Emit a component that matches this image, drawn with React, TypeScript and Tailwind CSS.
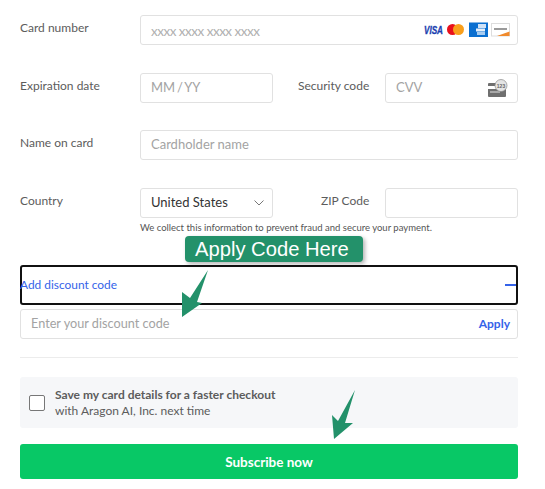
import React from 'react'

const inputBox = 'h-[30px] flex items-center rounded-[3px] border border-[#e1e1e1] bg-white pl-[10px] text-[13px] text-[#a3a3a3]'
const label = 'text-[12px] text-[#5c5c5c]'

const CardLogos = () => (
  <div className="flex items-center mr-[7px]">
    <svg width="86" height="16" viewBox="0 0 86 16">
      <text x="0" y="11.5" fontFamily="Liberation Sans" fontStyle="italic" fontWeight="700" fontSize="10" textLength="19" lengthAdjust="spacingAndGlyphs" stroke="#1a3fb0" strokeWidth="0.3" fill="#1a3fb0">VISA</text>
      <circle cx="28.5" cy="7.5" r="5.5" fill="#e8101c" />
      <circle cx="34.5" cy="7.5" r="5.5" fill="#f99f1b" />
      <rect x="45" y="0.5" width="19" height="14.5" fill="#0b6fd0" />
      <rect x="54" y="2" width="8" height="4" fill="#cfe2f7" />
      <rect x="52" y="6.5" width="9" height="3" fill="#e6f0fb" />
      <rect x="53" y="10" width="8" height="3" fill="#a8ccf0" />
      <rect x="67.5" y="1.5" width="18" height="12.5" fill="#fff" stroke="#ddd" />
      <rect x="70" y="6" width="13" height="2" fill="#9a9a9a" />
      <path d="M73 14 L85.5 9.5 L85.5 14 Z" fill="#f08a2c" />
    </svg>
  </div>
)

const CvvIcon = () => (
  <svg width="20" height="18" viewBox="0 0 20 18" className="mr-[9px]">
    <rect x="0" y="4" width="18" height="14" rx="1" fill="#6f6f6f" />
    <rect x="0" y="7" width="18" height="3" fill="#fff" />
    <rect x="2" y="12" width="10" height="2" fill="#a8a8a8" />
    <circle cx="13" cy="6.5" r="6" fill="#e4e4e4" stroke="#8a8a8a" strokeWidth="0.7" />
    <text x="13" y="8.5" textAnchor="middle" fontFamily="Liberation Sans" fontSize="5" fontWeight="700" fill="#666">123</text>
  </svg>
)

const Arrow = ({ className, d }: { className: string; d: string }) => (
  <svg width="27" height="50" viewBox="0 0 27 50" className={className}>
    <path d={d} fill="#23916a" />
  </svg>
)

export default function App() {
  return (
    <div className="relative w-[545px] h-[489px] bg-white overflow-hidden font-['Lato',sans-serif]">
      <div className="px-[20px] pt-[15px] w-[538px]">
        <div className="flex items-start">
          <div className={`w-[120px] pt-[4px] ${label}`}>Card number</div>
          <div className={`${inputBox} flex-1 justify-between`}>
            <span className="text-[13.5px] text-[#b0b0b0] tracking-[-0.5px] pt-[2px]">xxxx xxxx xxxx xxxx</span>
            <CardLogos />
          </div>
        </div>

        <div className="flex items-start mt-[28px]">
          <div className={`w-[120px] pt-[4px] ${label}`}>Expiration date</div>
          <div className={`${inputBox} w-[133px] [word-spacing:-1.5px]`}>MM / YY</div>
          <div className={`w-[112px] pl-[25px] pt-[4px] whitespace-nowrap ${label}`}>Security code</div>
          <div className={`${inputBox} w-[133px] justify-between`}>
            CVV
            <CvvIcon />
          </div>
        </div>

        <div className="flex items-start mt-[27px]">
          <div className={`w-[120px] pt-[4px] ${label}`}>Name on card</div>
          <div className={`${inputBox} flex-1`}>Cardholder name</div>
        </div>

        <div className="flex items-start mt-[28px]">
          <div className={`w-[120px] pt-[4px] ${label}`}>Country</div>
          <div className={`${inputBox} w-[133px] justify-between !text-[#333]`}>
            United States
            <svg width="10" height="6" viewBox="0 0 10 6" className="mr-[8px]">
              <path d="M0.5 0.5 L5 5 L9.5 0.5" fill="none" stroke="#777" strokeWidth="1" />
            </svg>
          </div>
          <div className={`w-[112px] pl-[48px] pt-[4px] whitespace-nowrap ${label}`}>ZIP Code</div>
          <div className={`${inputBox} w-[133px]`} />
        </div>

        <div className="ml-[120px] mt-[2px] h-[15px] text-[9.5px] leading-[15px] text-[#555] whitespace-nowrap">
          We collect this information to prevent fraud and secure your payment.
        </div>

        <div className="mt-[30px] h-[40px] flex items-center justify-between rounded-[3px] border-2 border-[#111] bg-white">
          <span className="text-[11.9px] text-[#3563e9] -ml-[2px]">Add discount code</span>
          <span className="w-[11px] h-[2px] bg-[#3563e9]" />
        </div>

        <div className="mt-[4px] h-[30px] flex items-center justify-between rounded-[3px] border border-[#e1e1e1] pl-[10px] pr-[7px]">
          <span className="text-[12.7px] text-[#a3a3a3]">Enter your discount code</span>
          <span className="text-[12px] font-bold text-[#3563e9]">Apply</span>
        </div>

        <div className="mt-[18px] h-px bg-[#ececec]" />

        <div className="mt-[19px] h-[51px] flex items-center rounded-[3px] bg-[#f6f7f9] pl-[9px]">
          <span className="w-[16px] h-[16px] rounded-[2px] border border-[#777] bg-white" />
          <div className="ml-[10px] text-[12px] leading-[16px] text-[#5c5c5c]">
            <div className="font-bold">Save my card details for a faster checkout</div>
            <div>with Aragon AI, Inc. next time</div>
          </div>
        </div>

        <button className="mt-[16px] w-full h-[35px] rounded-[3px] bg-[#08c866] pt-[1px] text-[13.5px] font-bold text-white">
          Subscribe now
        </button>
      </div>

      <div className="absolute left-[185px] top-[236px] w-[178px] h-[26px] flex items-center pl-[10px] rounded-[4px] bg-[#23916a] shadow-[2px_2px_4px_rgba(0,0,0,0.3)] font-['Liberation_Sans',sans-serif] text-[20.2px] text-white">
        Apply Code Here
      </div>
      <Arrow className="absolute left-[182px] top-[270px]" d="M26 0 L15 32 L20 33 L0 47 L0 22 L8 28 Z" />
      <Arrow className="absolute left-[332px] top-[390px]" d="M23 0 L13 33 L21 33 L2 49 L0 25 L6 31 Z" />
    </div>
  )
}
